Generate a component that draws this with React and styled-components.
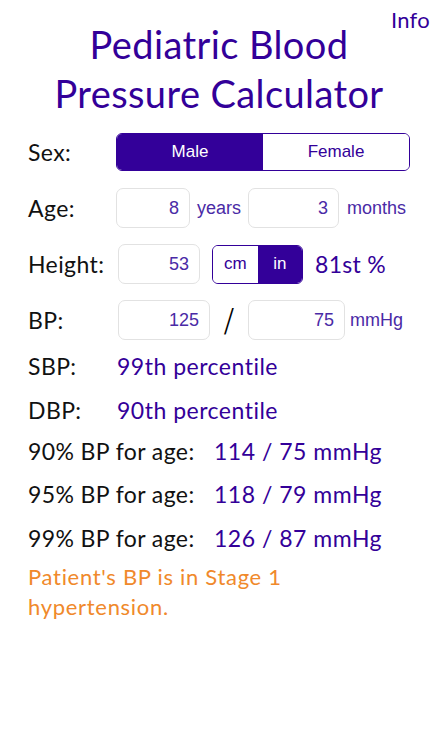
import React from 'react'
import styled, { createGlobalStyle } from 'styled-components'

const purple = '#330099'

const Global = createGlobalStyle`
  body {
    margin: 0;
    background: #fff;
    font-family: Lato, "Noto Sans", sans-serif;
    font-variant-ligatures: none;
  }
`

const Screen = styled.div`
  position: relative;
  width: 438px;
  height: 750px;
  padding: 20px 28px 0 28px;
  box-sizing: border-box;
  overflow: hidden;
`

const InfoLink = styled.div`
  position: absolute;
  top: 6px;
  right: 8px;
  font-size: 22px;
  letter-spacing: 0.3px;
  color: ${purple};
`

const Title = styled.h1`
  margin: 0;
  font-weight: 400;
  font-size: 38px;
  letter-spacing: 0.4px;
  line-height: 49px;
  text-align: center;
  color: ${purple};
`

const Row = styled.div`
  display: flex;
  align-items: center;
  height: ${props => props.h || 40}px;
  margin-top: ${props => props.mt || 16}px;
`

const Label = styled.div`
  width: ${props => props.w || 88}px;
  flex: none;
  font-size: 23px;
  letter-spacing: 0.4px;
  color: #111;
`

const Segmented = styled.div`
  display: flex;
  width: ${props => props.w}px;
  height: ${props => props.h}px;
  border: 1.5px solid ${purple};
  border-radius: 6px;
  box-sizing: border-box;
  overflow: hidden;
  flex: none;
`

const Segment = styled.div`
  flex: 1;
  display: flex;
  align-items: center;
  justify-content: center;
  font-family: "Liberation Sans", Arial, sans-serif;
  font-size: 17px;
  background: ${props => props.active ? purple : '#fff'};
  color: ${props => props.active ? '#fff' : purple};
`

const Field = styled.div`
  width: ${props => props.w}px;
  height: 40px;
  flex: none;
  box-sizing: border-box;
  border: 1px solid #e2e2e2;
  border-radius: 7px;
  display: flex;
  align-items: center;
  justify-content: flex-end;
  padding-right: 10px;
  font-family: "Liberation Sans", Arial, sans-serif;
  font-size: 18px;
  color: #4a2aa6;
`

const Unit = styled.div`
  font-family: "Liberation Sans", Arial, sans-serif;
  font-size: 18px;
  color: #4a2aa6;
  margin: 0 ${props => props.mr || 0}px 0 ${props => props.ml || 0}px;
`

const Slash = styled.div`
  width: 38px;
  flex: none;
  text-align: center;
  font-family: "DejaVu Sans", sans-serif;
  font-size: 32px;
  font-weight: 200;
  color: #000;
`

const Percent = styled.div`
  font-size: 23px;
  letter-spacing: 0.3px;
  color: ${purple};
  margin-left: 12px;
`

const Value = styled.div`
  font-size: 23px;
  letter-spacing: 0.5px;
  color: ${purple};
`

const Verdict = styled.p`
  margin: 9px 0 0 0;
  font-size: 22px;
  letter-spacing: 0.7px;
  line-height: 30px;
  color: #f0892b;
  width: 300px;
`

export default function App() {
  return (
    <Screen>
      <Global />
      <InfoLink>Info</InfoLink>
      <Title>Pediatric Blood<br />Pressure Calculator</Title>

      <Row h={38} mt={15}>
        <Label>Sex:</Label>
        <Segmented w={294} h={38}>
          <Segment active>Male</Segment>
          <Segment>Female</Segment>
        </Segmented>
      </Row>

      <Row mt={17}>
        <Label>Age:</Label>
        <Field w={74}>8</Field>
        <Unit ml={7} mr={7}>years</Unit>
        <Field w={91}>3</Field>
        <Unit ml={8}>months</Unit>
      </Row>

      <Row>
        <Label w={90}>Height:</Label>
        <Field w={82}>53</Field>
        <Segmented w={91} h={39} style={{ marginLeft: 12 }}>
          <Segment>cm</Segment>
          <Segment active>in</Segment>
        </Segmented>
        <Percent>81st %</Percent>
      </Row>

      <Row>
        <Label w={90}>BP:</Label>
        <Field w={92}>125</Field>
        <Slash>/</Slash>
        <Field w={97}>75</Field>
        <Unit ml={5}>mmHg</Unit>
      </Row>

      <Row h={30} mt={11}>
        <Label w={89}>SBP:</Label>
        <Value>99th percentile</Value>
      </Row>
      <Row h={30} mt={14}>
        <Label w={89}>DBP:</Label>
        <Value>90th percentile</Value>
      </Row>
      <Row h={30} mt={11}>
        <Label w={186}>90% BP for age:</Label>
        <Value>114 / 75 mmHg</Value>
      </Row>
      <Row h={30} mt={13}>
        <Label w={186}>95% BP for age:</Label>
        <Value>118 / 79 mmHg</Value>
      </Row>
      <Row h={30} mt={14}>
        <Label w={186}>99% BP for age:</Label>
        <Value>126 / 87 mmHg</Value>
      </Row>
      <Verdict>Patient's BP is in Stage 1 hypertension.</Verdict>
    </Screen>
  )
}
